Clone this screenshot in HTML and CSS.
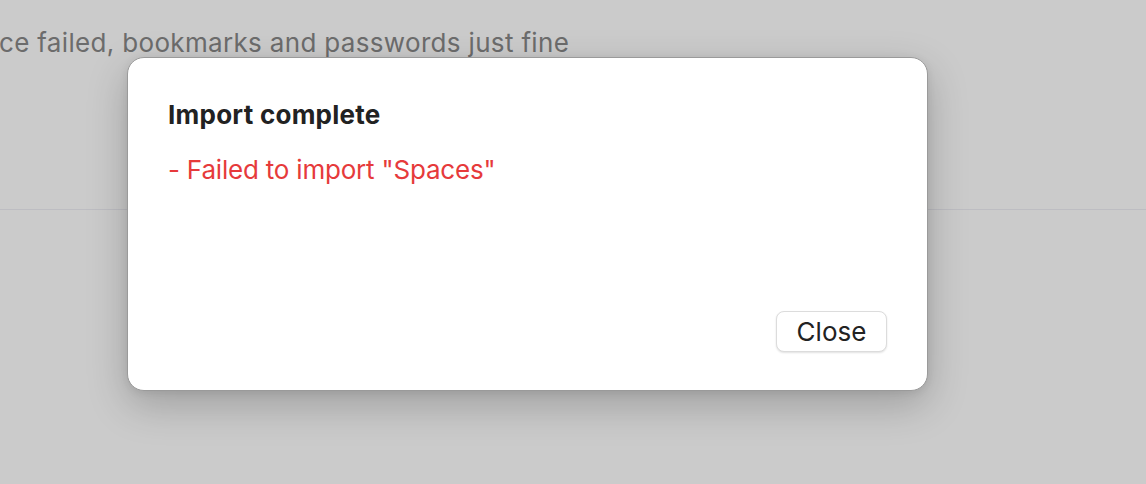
FILE: index.html
```html
<!DOCTYPE html>
<html>
<head>
<meta charset="utf-8">
<link rel="stylesheet" href="styles.css">
</head>
<body>
<div class="page">
  <div class="bg-content">
    <p class="bg-text">ce failed, bookmarks and passwords just fine</p>
    <div class="bg-rule"></div>
  </div>
  <div class="dialog">
    <h1 class="title">Import complete</h1>
    <p class="error">- Failed to import "Spaces"</p>
    <div class="actions">
      <button class="btn">Close</button>
    </div>
  </div>
</div>
</body>
</html>
```
FILE: styles.css
```css
* { box-sizing: border-box; }
html, body { margin: 0; padding: 0; }
body {
  width: 1146px;
  height: 484px;
  overflow: hidden;
  background: #cbcbcb;
  font-family: Inter, "Liberation Sans", sans-serif;
}
.page {
  position: relative;
  width: 1146px;
  height: 484px;
}
.bg-content {
  display: flex;
  flex-direction: column;
}
.bg-text {
  margin: 27px 0 0 -1px;
  font-size: 26px;
  line-height: 32px;
  color: #6c6c6c;
  letter-spacing: 0.33px;
}
.bg-rule {
  margin-top: 150px;
  height: 1px;
  background: #bdbdc2;
}
.dialog {
  position: absolute;
  left: 127px;
  top: 57px;
  width: 801px;
  height: 334px;
  background: #ffffff;
  border: 1px solid #9a9a9a;
  border-radius: 17px;
  box-shadow: 0 14px 40px rgba(0,0,0,0.22), 0 2px 8px rgba(0,0,0,0.08);
  padding: 40px 40px 38px 40px;
  display: flex;
  flex-direction: column;
}
.title {
  margin: 0;
  font-size: 26px;
  line-height: 34px;
  font-weight: 700;
  color: #222222;
  letter-spacing: 0.25px;
}
.error {
  margin: 22px 0 0 0;
  font-size: 26px;
  line-height: 32px;
  color: #e63a3b;
  letter-spacing: -0.2px;
}
.actions {
  margin-top: auto;
  display: flex;
  justify-content: flex-end;
}
.btn {
  width: 111px;
  height: 41px;
  background: #ffffff;
  border: 1px solid #dcdcdc;
  border-radius: 8px;
  box-shadow: 0 1px 2px rgba(0,0,0,0.12);
  font-family: Inter, "Liberation Sans", sans-serif;
  font-size: 26px;
  color: #222222;
  padding: 0;
}
```
